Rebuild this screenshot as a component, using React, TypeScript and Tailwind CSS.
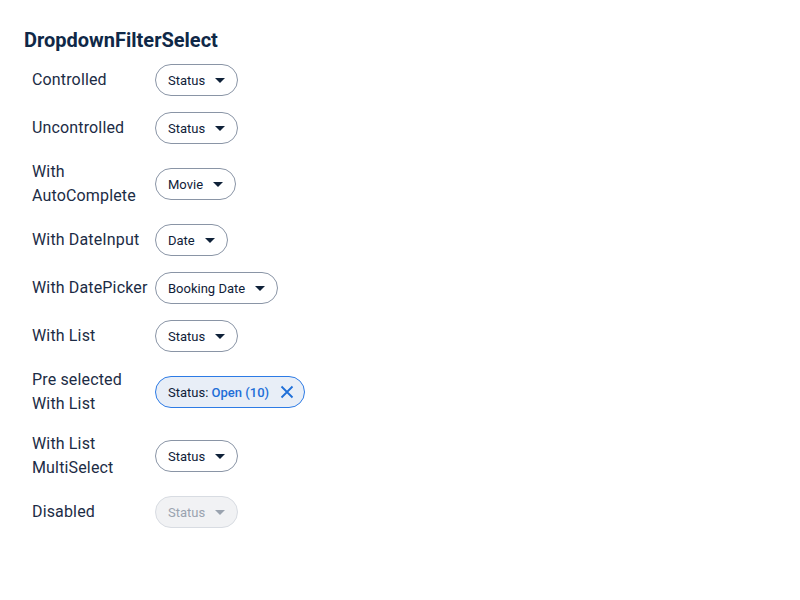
import { ReactNode } from "react";

const Caret = ({ disabled }: { disabled?: boolean }) => (
  <svg width="10" height="5" viewBox="0 0 10 5" className={disabled ? "fill-[#9aa3af]" : "fill-[#0f2138]"}>
    <path d="M0 0 L10 0 L5 5 Z" />
  </svg>
);

const Chip = ({ label, disabled }: { label: string; disabled?: boolean }) => (
  <button
    disabled={disabled}
    className={
      "flex h-8 items-center gap-[10px] rounded-full border pl-3 pr-3 text-[13px] " +
      (disabled
        ? "border-[#d8dce2] bg-[#f1f2f4] text-[#9aa3af]"
        : "border-[#8a95a6] bg-white text-[#0f2138]")
    }>
    <span className="pt-px">{label}</span>
    <Caret disabled={disabled} />
  </button>
);

const SelectedChip = () => (
  <button className="flex h-8 items-center gap-[11px] rounded-full border border-[#2d7be5] bg-[#e8eef7] pl-3 pr-[10px] text-[13px] text-[#0f2138]">
    <span className="pt-px">
      Status: <span className="font-medium text-[#1f6fd8]">Open (10)</span>
    </span>
    <svg width="14" height="14" viewBox="0 0 14 14" className="stroke-[#1f6fd8]" strokeWidth="1.8">
      <path d="M1.5 1.5 L12.5 12.5 M12.5 1.5 L1.5 12.5" />
    </svg>
  </button>
);

const Row = ({ label, children }: { label: string; children: ReactNode }) => (
  <div className="flex items-center">
    <span className="w-[116px] mr-[7px] text-base leading-6 tracking-[0.15px] text-[#1c2c45]">{label}</span>
    {children}
  </div>
);

export default function App() {
  return (
    <div className="min-h-[600px] bg-white px-6 pt-6 font-['Roboto',sans-serif]">
      <h1 className="mb-2 text-xl leading-8 font-bold text-[#0f2847]">DropdownFilterSelect</h1>
      <div className="flex flex-col gap-4 pl-2">
        <Row label="Controlled">
          <Chip label="Status" />
        </Row>
        <Row label="Uncontrolled">
          <Chip label="Status" />
        </Row>
        <Row label="With AutoComplete">
          <Chip label="Movie" />
        </Row>
        <Row label="With DateInput">
          <Chip label="Date" />
        </Row>
        <Row label="With DatePicker">
          <Chip label="Booking Date" />
        </Row>
        <Row label="With List">
          <Chip label="Status" />
        </Row>
        <Row label="Pre selected With List">
          <SelectedChip />
        </Row>
        <Row label="With List MultiSelect">
          <Chip label="Status" />
        </Row>
        <Row label="Disabled">
          <Chip label="Status" disabled />
        </Row>
      </div>
    </div>
  );
}
